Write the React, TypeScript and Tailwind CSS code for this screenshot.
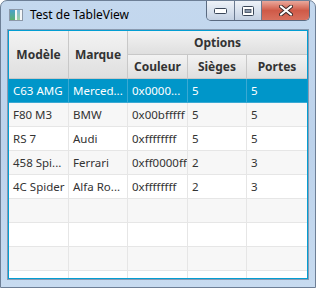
import type { ReactNode } from "react";

const cars = [
  { model: "C63 AMG", brand: "Merced...", color: "0x0000...", seats: "5", doors: "5" },
  { model: "F80 M3", brand: "BMW", color: "0x00bfffff", seats: "5", doors: "5" },
  { model: "RS 7", brand: "Audi", color: "0xffffffff", seats: "5", doors: "5" },
  { model: "458 Spi...", brand: "Ferrari", color: "0xff0000ff", seats: "2", doors: "3" },
  { model: "4C Spider", brand: "Alfa Ro...", color: "0xffffffff", seats: "2", doors: "3" },
];

const widths = ["w-[60px]", "w-[59px]", "w-[60px]", "w-[59px]", "w-[60px]"];

function TitleButtons() {
  return (
    <div className="flex h-[20px] overflow-hidden rounded-b-[5px] border border-t-0 border-[#5a6a80]">
      <div className="flex w-[28px] items-center justify-center border-r border-[#6b7a90] bg-gradient-to-b from-[#eef2f8] via-[#d9e2ee] to-[#c3d0e2]">
        <svg width="13" height="6" viewBox="0 0 13 6">
          <rect x="0.5" y="0.5" width="12" height="5" rx="1" fill="#fff" stroke="#3a4658" />
        </svg>
      </div>
      <div className="flex w-[27px] items-center justify-center border-r border-[#6b7a90] bg-gradient-to-b from-[#eef2f8] via-[#d9e2ee] to-[#c3d0e2]">
        <svg width="12" height="10" viewBox="0 0 12 10">
          <rect x="0.5" y="0.5" width="11" height="9" rx="1" fill="#fff" stroke="#3a4658" />
          <rect x="3" y="3.5" width="6" height="3" fill="#8a98ac" stroke="#3a4658" strokeWidth="0.8" />
        </svg>
      </div>
      <div className="flex w-[47px] items-center justify-center bg-gradient-to-b from-[#e9a89c] via-[#cf5a48] to-[#d8705e]">
        <svg width="14" height="11" viewBox="0 0 14 11">
          <path d="M2 1.5 L12 9.5 M12 1.5 L2 9.5" stroke="#3a2a2a" strokeWidth="4" strokeLinecap="round" />
          <path d="M2 1.5 L12 9.5 M12 1.5 L2 9.5" stroke="#fff" strokeWidth="2.2" strokeLinecap="round" />
        </svg>
      </div>
    </div>
  );
}

function HeaderCell({ children, className }: { children?: ReactNode; className: string }) {
  return (
    <div
      className={`flex items-center justify-center border-r border-b border-[#c8c8c8] bg-gradient-to-b from-[#f3f3f3] to-[#dfdfdf] font-bold text-[#333] ${className}`}
    >
      {children}
    </div>
  );
}

function Row({ cells, index }: { cells: string[]; index: number }) {
  const selected = index === 0;
  const bg = selected ? "bg-[#0096c9] text-white" : index % 2 ? "bg-[#f7f7f7] text-[#333]" : "bg-white text-[#333]";
  const line = selected ? "border-[#3aa9d3]" : "border-[#e6e6e6]";
  return (
    <div className={`flex h-[24px] shrink-0 border-b text-[11.5px] ${line} ${bg}`}>
      {widths.map((w, i) => (
        <div
          key={i}
          className={`${w} flex items-center overflow-hidden whitespace-nowrap border-r ${line} pl-[4px] ${i === 4 ? "border-r-0" : ""}`}
        >
          {cells[i] ?? ""}
        </div>
      ))}
    </div>
  );
}

export default function App() {
  const rows = [...cars.map((c) => [c.model, c.brand, c.color, c.seats, c.doors])];
  while (rows.length < 9) rows.push([]);

  return (
    <div className="h-[288px] w-[316px] overflow-hidden font-['Noto_Sans',sans-serif] text-[12px]">
      <div className="flex h-full w-full flex-col rounded-t-[7px] border border-[#6d7f96] bg-gradient-to-b from-[#c4d8ee] via-[#bcd2eb] to-[#c7dbf0] px-[6px] pb-[7px]">
        <div className="flex h-[28px] shrink-0 items-start">
          <div className="mt-[8px] ml-[2px] flex h-[12px] w-[14px] overflow-hidden border border-[#8c98a8] bg-[#f4f6f8]">
            <div className="w-[5px] bg-gradient-to-b from-[#4aa0c8] to-[#5cb070]" />
            <div className="w-[2px]" />
            <div className="w-[3px] bg-gradient-to-b from-[#7fb8d8] to-[#9ccf9c]" />
          </div>
          <div className="mt-[6px] ml-[7px] text-[12px] leading-[16px] text-black">Test de TableView</div>
          <div className="ml-auto mr-[-1px]">
            <TitleButtons />
          </div>
        </div>
        <div className="flex min-h-0 flex-1 flex-col border border-[#8a9ab0] bg-white">
          <div className="flex min-h-0 flex-1 flex-col overflow-hidden border border-[#039ed3]">
            <div className="flex h-[48px] shrink-0">
              <HeaderCell className="w-[60px]">Modèle</HeaderCell>
              <HeaderCell className="w-[59px]">Marque</HeaderCell>
              <div className="flex w-[179px] flex-col">
                <HeaderCell className="h-[24px] border-r-0">Options</HeaderCell>
                <div className="flex h-[24px]">
                  <HeaderCell className="w-[60px]">Couleur</HeaderCell>
                  <HeaderCell className="w-[59px]">Sièges</HeaderCell>
                  <HeaderCell className="w-[60px] border-r-0">Portes</HeaderCell>
                </div>
              </div>
            </div>
            {rows.map((r, i) => (
              <Row key={i} cells={r} index={i} />
            ))}
          </div>
        </div>
      </div>
    </div>
  );
}
